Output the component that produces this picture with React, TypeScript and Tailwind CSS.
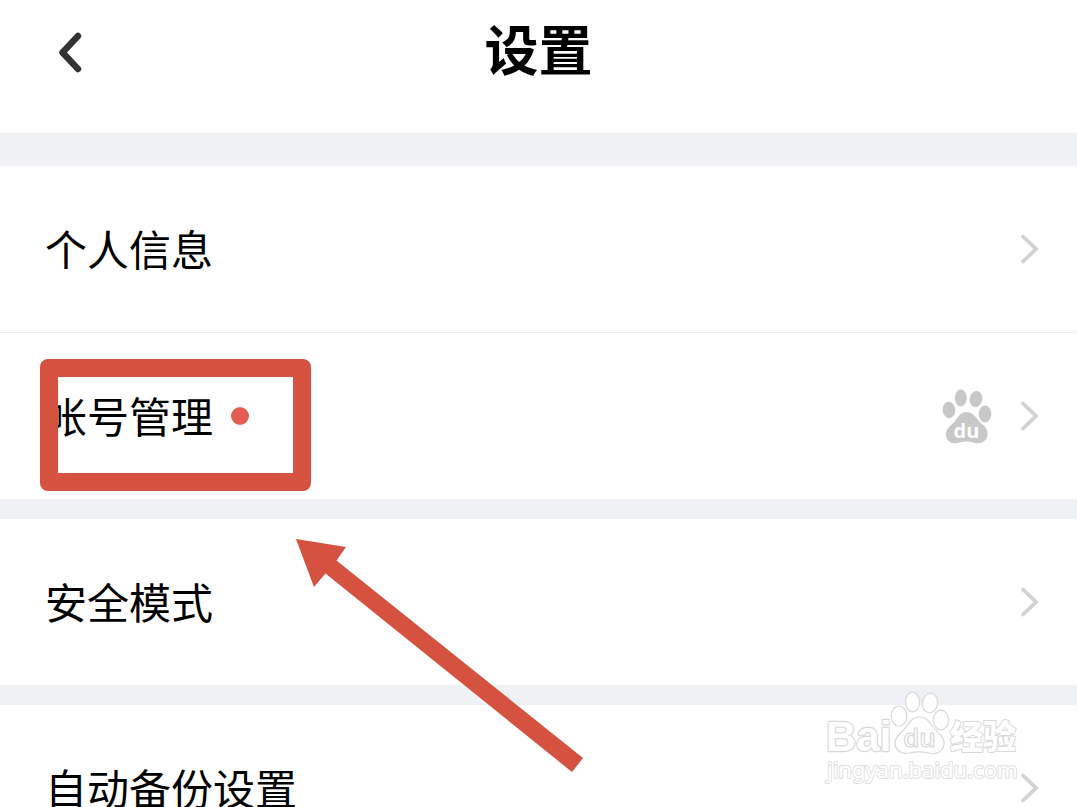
import React from 'react';

interface SettingItem {
  label: string;
  hasDot?: boolean;
  showPaw?: boolean;
  highlighted?: boolean;
}

const groups: SettingItem[][] = [
  [
    { label: '个人信息' },
    { label: '帐号管理', hasDot: true, showPaw: true, highlighted: true },
  ],
  [{ label: '安全模式' }],
  [{ label: '自动备份设置' }],
];

const ChevronIcon: React.FC = () => (
  <svg width="20" height="30" viewBox="0 0 20 30" fill="none" aria-hidden="true">
    <path d="M3 2.5 L16 15 L3 27.5" stroke="#d2d2d2" strokeWidth="3.8" strokeLinecap="round" />
  </svg>
);

const PawIcon: React.FC = () => (
  <svg width="50" height="56" viewBox="0 0 50 56" fill="#c8c8c8" aria-hidden="true">
    <ellipse cx="7" cy="22" rx="6.3" ry="8.2" transform="rotate(-6 7 22)" />
    <ellipse cx="18.8" cy="10" rx="5.9" ry="8.5" />
    <ellipse cx="34" cy="11" rx="6.3" ry="8.2" transform="rotate(10 34 11)" />
    <ellipse cx="43" cy="26" rx="6.3" ry="8.4" />
    <path d="M24.5 24 C30 24 33 28 36 32 C40 37 46 39 45.5 46.5 C45 53.5 39 56 33 55 C27 53 22 53 16 55 C9 56.5 4 52.5 4 46.5 C4 39 11 37 14 31.5 C17 27 20 24 24.5 24Z" />
    <text x="24.5" y="50" textAnchor="middle" fontFamily="'Open Sans', 'Noto Sans', sans-serif" fontWeight="700" fontSize="20" fill="#fff">du</text>
  </svg>
);

const ArrowMark: React.FC = () => (
  <svg
    className="pointer-events-none absolute left-[296px] top-5 z-10"
    width="288"
    height="234"
    viewBox="0 0 288 234"
    aria-hidden="true"
  >
    <path d="M0 0 L50 8 L40.5 21.5 L287 219 L276 233 L29.5 34.5 L18 48Z" fill="#d65240" />
  </svg>
);

const Watermark: React.FC = () => (
  <svg
    className="pointer-events-none absolute bottom-5 right-[57px]"
    width="196"
    height="98"
    viewBox="0 0 196 98"
    fill="#fff"
    stroke="#d8d8d8"
    strokeWidth="1.2"
    strokeLinejoin="round"
    aria-hidden="true"
  >
    <text x="2" y="62" fontFamily="'Liberation Sans', sans-serif" fontWeight="700" fontSize="42" strokeWidth="2.4" paintOrder="stroke">Bai</text>
    <ellipse cx="75" cy="27" rx="7.8" ry="10" />
    <ellipse cx="88.5" cy="13" rx="7" ry="9.8" />
    <ellipse cx="106" cy="14" rx="7.6" ry="9.8" transform="rotate(8 106 14)" />
    <ellipse cx="117" cy="31" rx="7.6" ry="9.8" />
    <path d="M95.5 28 C103 28 106 34 110 39 C114 44 121 48 120 55 C119 63 112 66 105 64 C98 62.5 92 62.5 85 64 C77 65.5 71 61 71 54 C71 47 78 44 82 38 C86 32 89 28 95.5 28Z" />
    <text x="95.5" y="58" textAnchor="middle" fontFamily="'Open Sans', sans-serif" fontWeight="600" fontSize="26">du</text>
    <text x="126" y="60" fontFamily="'Noto Sans CJK SC', sans-serif" fontWeight="900" fontSize="33" strokeWidth="2" paintOrder="stroke">经验</text>
    <text x="3" y="89" fontFamily="'Noto Sans', 'Open Sans', sans-serif" fontSize="22" stroke="#e0e0e0" strokeWidth="2" paintOrder="stroke">jingyan.baidu.com</text>
  </svg>
);

const SettingRow: React.FC<{ item: SettingItem }> = ({ item }) => (
  <li className="relative">
    <button type="button" className="flex h-[166px] w-full items-center justify-between pl-[45px] pr-[37px]">
      <span className="flex items-center gap-[18px]">
        <span className="pb-0.5 text-[42px] leading-[60px]">{item.label}</span>
        {item.hasDot && <span className="h-[18px] w-[18px] rounded-full bg-[#e35d55]" />}
      </span>
      <span className="flex items-center gap-7">
        {item.showPaw && <PawIcon />}
        <ChevronIcon />
      </span>
    </button>
    {item.highlighted && (
      <div className="pointer-events-none absolute left-10 top-[26px] h-[132px] w-[271px] rounded-lg border-[18px] border-[#d65240]" />
    )}
  </li>
);

const App: React.FC = () => {
  return (
    <main className="relative flex h-screen flex-col overflow-hidden bg-[#f0f1f5] font-['Noto_Sans_CJK_SC',sans-serif] text-black">
      <header className="mb-8 grid h-[134px] shrink-0 grid-cols-[1fr_auto_1fr] items-start border-b border-[#ececee] bg-white px-12">
        <button type="button" aria-label="返回" className="flex h-[104px] w-11 items-center justify-center">
          <svg width="24" height="42" viewBox="0 0 24 42" fill="none" aria-hidden="true">
            <path d="M20 5 L4.5 21.5 L20 38" stroke="#333335" strokeWidth="6.5" strokeLinecap="round" strokeLinejoin="round" />
          </svg>
        </button>
        <h1 className="text-[54px] font-bold leading-[96px]">设置</h1>
      </header>

      <div className="flex flex-col gap-5">
        {groups.map((items, index) => (
          <section key={index} className="relative">
            <ul className="divide-y divide-[#ebebeb] bg-white">
              {items.map((item) => (
                <SettingRow key={item.label} item={item} />
              ))}
            </ul>
            {index === 1 && <ArrowMark />}
          </section>
        ))}
      </div>

      <Watermark />
    </main>
  );
};

export default App;
